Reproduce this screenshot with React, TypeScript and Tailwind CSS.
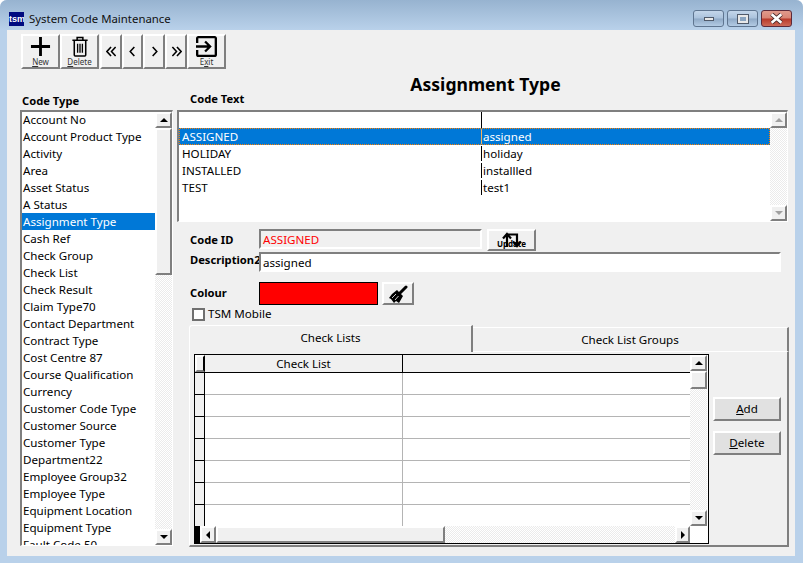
import type { ReactNode } from "react";

const codeTypes = [
  "Account No", "Account Product Type", "Activity", "Area", "Asset Status", "A Status",
  "Assignment Type", "Cash Ref", "Check Group", "Check List", "Check Result", "Claim Type70",
  "Contact Department", "Contract Type", "Cost Centre 87", "Course Qualification", "Currency",
  "Customer Code Type", "Customer Source", "Customer Type", "Department22", "Employee Group32",
  "Employee Type", "Equipment Location", "Equipment Type", "Fault Code 50",
];

const codeRows = [
  ["ASSIGNED", "assigned"],
  ["HOLIDAY", "holiday"],
  ["INSTALLED", "installled"],
  ["TEST", "test1"],
];

const raised = "border-2 border-t-white border-l-white border-r-[#7f7f7f] border-b-[#7f7f7f] bg-[#f0f0f0]";
const sunken = "border-2 border-t-[#7f7f7f] border-l-[#7f7f7f] border-r-white border-b-white";
const track = "bg-[repeating-conic-gradient(#ffffff_0_25%,#ebebeb_0_50%)] bg-[length:2px_2px]";

type Dir = "up" | "down" | "left" | "right";

const Arrow = ({ dir, color = "#000" }: { dir: Dir; color?: string }) => {
  const pts = {
    up: "0,4 8,4 4,0",
    down: "0,0 8,0 4,4",
    left: "4,0 4,8 0,4",
    right: "0,0 0,8 4,4",
  }[dir];
  const vertical = dir === "up" || dir === "down";
  return (
    <svg width={vertical ? 8 : 4} height={vertical ? 4 : 8} viewBox={vertical ? "0 0 8 4" : "0 0 4 8"}>
      <polygon points={pts} fill={color} />
    </svg>
  );
};

const VScroll = ({ disabled, thumb }: { disabled?: boolean; thumb?: string }) => {
  const color = disabled ? "#a0a0a0" : "#000";
  return (
    <div className={"flex flex-col w-[17px] h-full shrink-0 " + track}>
      <div className={"h-[16px] shrink-0 flex items-center justify-center " + raised}>
        <Arrow dir="up" color={color} />
      </div>
      {thumb && <div className={"shrink-0 " + thumb + " " + raised} />}
      <div className="flex-1" />
      <div className={"h-[16px] shrink-0 flex items-center justify-center " + raised}>
        <Arrow dir="down" color={color} />
      </div>
    </div>
  );
};

const ToolButton = ({ children, label, width = "w-[39px]" }: { children: ReactNode; label?: ReactNode; width?: string }) => (
  <div className={"h-[35px] flex flex-col items-center shrink-0 " + width + (label ? " " : " justify-center ") + raised}>
    {children}
    {label && <span className="text-[8px] leading-[9px] text-[#333]">{label}</span>}
  </div>
);

const Chevrons = ({ d }: { d: string }) => (
  <svg width="11" height="11" viewBox="0 0 12 12" fill="none" stroke="#000" strokeWidth="1.7">
    <path d={d} />
  </svg>
);

const CaptionButton = ({ children, close }: { children: ReactNode; close?: boolean }) => (
  <div
    className={
      "w-[31px] h-[17px] rounded-[3px] border flex items-center justify-center " +
      (close
        ? "border-[#5c2a3a] bg-[linear-gradient(#e09a8c_0%,#d98474_48%,#b8392a_52%,#cc6a58_100%)]"
        : "border-[#5f7590] bg-[linear-gradient(#c4d6ea_0%,#aac2dc_48%,#8fa9c6_52%,#b3cbe4_100%)]")
    }
  >
    {children}
  </div>
);

const GridRow = () => (
  <div className="h-[22px] flex shrink-0">
    <div className="w-[10px] bg-[#f0f0f0] border-r border-b border-black shrink-0" />
    <div className="w-[198px] bg-white border-r border-b border-[#b4b4b4] shrink-0" />
    <div className="flex-1 bg-white border-b border-[#b4b4b4]" />
  </div>
);

export default function App() {
  return (
    <div className="w-[803px] h-[563px] bg-white overflow-hidden text-[11.6px] leading-[14px] text-black font-['Noto_Sans','Open_Sans',sans-serif]">
      <div className="w-full h-full rounded-t-[7px] flex flex-col bg-[#b9d1ea] overflow-hidden">
        {/* Title bar */}
        <div className="h-[30px] shrink-0 flex items-center pl-[9px] pr-[11px] pt-[7px] bg-[linear-gradient(#97b3d0,#b9d1ea)]">
          <div className="w-[15px] h-[14px] bg-[#000a80] text-white text-[9px] leading-[14px] font-bold text-center overflow-hidden font-['Liberation_Sans',sans-serif]">
            tsm
          </div>
          <span className="ml-[5px] text-[11.4px] text-[#111]">System Code Maintenance</span>
          <div className="ml-auto flex gap-[3px]">
            <CaptionButton>
              <div className="w-[10px] h-[4px] bg-[#e8e8e8] border border-[#505a6a]" />
            </CaptionButton>
            <CaptionButton>
              <div className="w-[10px] h-[8px] border-2 border-[#e8e8e8] outline outline-[#505a6a] bg-[#8aa4c0]" />
            </CaptionButton>
            <CaptionButton close>
              <svg width="13" height="11" viewBox="0 0 12 10">
                <path d="M1.5 1 L10.5 9 M10.5 1 L1.5 9" stroke="#4a2a2a" strokeWidth="4" />
                <path d="M1.5 1 L10.5 9 M10.5 1 L1.5 9" stroke="#fff" strokeWidth="2.4" />
              </svg>
            </CaptionButton>
          </div>
        </div>

        {/* Client area */}
        <div className="ml-[7px] w-[788px] h-[526px] shrink-0 bg-[#f0f0f0]">
          {/* Toolbar */}
          <div className="h-[39px] pt-[4px] pl-[14px] flex items-start">
            <ToolButton label={<><u>N</u>ew</>}>
              <svg width="21" height="21" viewBox="0 0 22 22" className="-ml-[1px]">
                <path d="M11 1 V21 M1 11 H21" stroke="#000" strokeWidth="3" />
              </svg>
            </ToolButton>
            <ToolButton label={<><u>D</u>elete</>}>
              <svg width="18" height="21" viewBox="0 0 18 22" fill="none" stroke="#000" strokeWidth="1.6">
                <path d="M1 4.5 H17 M6 4.5 V1.5 H12 V4.5 M3 4.5 V20 Q3 21 4 21 H14 Q15 21 15 20 V4.5" />
                <path d="M6.5 8 V17.5 M9 8 V17.5 M11.5 8 V17.5" strokeWidth="1.4" />
              </svg>
            </ToolButton>
            <div className="w-[1px]" />
            <ToolButton width="w-[22px]">
              <Chevrons d="M5.5 1 L1 6 L5.5 11 M10.5 1 L6 6 L10.5 11" />
            </ToolButton>
            <ToolButton width="w-[21px]">
              <Chevrons d="M8 1 L3.5 6 L8 11" />
            </ToolButton>
            <ToolButton width="w-[22px]">
              <Chevrons d="M4 1 L8.5 6 L4 11" />
            </ToolButton>
            <ToolButton width="w-[22px]">
              <Chevrons d="M1.5 1 L6 6 L1.5 11 M6.5 1 L11 6 L6.5 11" />
            </ToolButton>
            <ToolButton label={<>E<u>x</u>it</>}>
              <svg viewBox="3 3 18 18" className="w-[21px] h-[21px]">
                <path d="M10.09 15.59L11.5 17l5-5-5-5-1.41 1.41L12.67 11H3v2h9.67l-2.58 2.59zM19 3H5c-1.11 0-2 .9-2 2v4h2V5h14v14H5v-4H3v4c0 1.1.89 2 2 2h14c1.1 0 2-.9 2-2V5c0-1.1-.9-2-2-2z" fill="#000" />
              </svg>
            </ToolButton>
          </div>

          <div className="flex">
            {/* Code type list */}
            <div className="ml-[13px] w-[153px] shrink-0">
              <div className="mt-[25px] h-[16px] pl-[2px] text-[11.2px] font-bold">Code Type</div>
              <div className={"h-[436px] flex bg-white border-r-[1px] border-b-[1px] " + sunken}>
                <div className="w-[133px] overflow-hidden">
                  <div className="-mt-[1px]">
                    {codeTypes.map((t) => (
                      <div
                        key={t}
                        className={
                          "h-[17px] leading-[17px] pl-[1px] whitespace-nowrap " +
                          (t === "Assignment Type" ? "bg-[#0078d7] text-white" : "")
                        }
                      >
                        {t}
                      </div>
                    ))}
                  </div>
                </div>
                <VScroll thumb="h-[147px]" />
              </div>
            </div>

            {/* Right side */}
            <div className="ml-[4px] w-[612px] shrink-0">
              <div className="mt-[5px] h-[20px] pl-[5px] text-center text-[17.6px] leading-[20px] font-bold">Assignment Type</div>
              <div className="-mt-[2px] mb-[2px] h-[16px] pl-[13px] text-[11.2px] font-bold">Code Text</div>

              <div className={"h-[112px] w-[611px] flex bg-white border-r-[1px] border-b-[1px] " + sunken}>
                <div className="w-[591px]">
                  <div className="h-[16px] flex">
                    <div className="w-[302px]" />
                    <div className="flex-1 border-l border-black" />
                  </div>
                  {codeRows.map(([a, b], i) => (
                    <div
                      key={a}
                      className={
                        "h-[17px] p-[1px] leading-[15px] " +
                        (i === 0 ? "text-white bg-[repeating-conic-gradient(#ff8000_0_25%,#0078d7_0_50%)] bg-[length:2px_2px]" : "")
                      }
                    >
                      <div className={"h-full flex " + (i === 0 ? "bg-[#0078d7]" : "")}>
                        <div className="w-[301px] pl-[2px]">{a}</div>
                        <div className={"flex-1 pl-[1px] border-l " + (i === 0 ? "border-[#f5b060]" : "border-black")}>{b}</div>
                      </div>
                    </div>
                  ))}
                </div>
                <VScroll disabled />
              </div>

              {/* Code ID / description */}
              <div className="mt-[7px] h-[23px] flex items-start">
                <div className="w-[82px] pl-[13px] pt-[4px] text-[11.2px] font-bold">Code ID</div>
                <div className={"w-[223px] h-[20px] leading-[18px] pl-[2px] text-[#f00] " + sunken}>ASSIGNED</div>
                <div className={"ml-[5px] w-[49px] h-[22px] flex flex-col items-center relative " + raised}>
                  <svg width="22" height="16" viewBox="0 0 22 16" fill="none" stroke="#000" strokeWidth="2.2" className="mt-[1px]">
                    <path d="M6 15 V3 M2 6.5 L6 2 L10 6.5" />
                    <path d="M7 2.5 H16 V13 M12 9.5 L16 14 L20 9.5" />
                  </svg>
                  <span className="absolute top-[8px] text-[8px] leading-[10px] font-bold">Update</span>
                </div>
              </div>
              <div className="h-[20px] flex">
                <div className="w-[82px] pl-[13px] pt-[1px] text-[11.2px] font-bold whitespace-nowrap">Description2</div>
                <div className={"w-[522px] h-[20px] leading-[18px] pl-[2px] bg-white " + sunken}>assigned</div>
              </div>

              {/* Colour */}
              <div className="mt-[10px] h-[23px] flex">
                <div className="w-[82px] pl-[13px] pt-[4px] text-[11.2px] font-bold">Colour</div>
                <div className="w-[119px] border border-black bg-[#f00]" />
                <div className={"ml-[4px] w-[32px] flex items-center justify-center " + raised}>
                  <svg width="20" height="20" viewBox="0 0 20 20">
                    <path d="M12 9 L18 3" stroke="#000" strokeWidth="3" strokeLinecap="round" />
                    <polygon points="9,6 15,12 11,19 8,17 6,19 3,15 1,14 4,10" fill="#000" />
                    <path d="M8 10 L4 14 M10.5 12 L7 16" stroke="#fff" strokeWidth="0.8" />
                  </svg>
                </div>
              </div>

              <div className="mt-[2px] h-[14px] flex items-center pl-[15px]">
                <div className="w-[13px] h-[13px] bg-white border-2 border-[#707070]" />
                <span className="ml-[3px]">TSM Mobile</span>
              </div>

              {/* Tabs */}
              <div className="mt-[4px] ml-[12px] w-[600px] h-[27px] flex items-end">
                <div className="w-[284px] h-[27px] leading-[24px] text-center bg-[#f0f0f0] border-t border-l border-white border-r-2 border-r-[#7f7f7f] rounded-tl-[3px]">
                  Check Lists
                </div>
                <div className="flex-1 h-[25px] leading-[24px] text-center border-t border-white border-r-2 border-r-[#7f7f7f] border-b">
                  Check List Groups
                </div>
              </div>
              <div className="ml-[12px] w-[600px] h-[195px] pt-[2px] pl-[4px] flex border-l border-l-white border-r-2 border-r-[#7f7f7f] border-b-2 border-b-[#7f7f7f]">
                {/* Grid */}
                <div className="w-[515px] h-[190px] shrink-0 border border-black flex flex-col">
                  <div className="h-[171px] flex shrink-0">
                    <div className="w-[495px] overflow-hidden flex flex-col">
                      <div className="h-[18px] shrink-0 flex border-b border-black">
                        <div className="w-[10px] shrink-0 border-2 border-t-white border-l-white border-b-[#7f7f7f] border-r-black" />
                        <div className="w-[198px] shrink-0 text-center leading-[18px] border-r border-black">Check List</div>
                        <div className="flex-1" />
                      </div>
                      {[0, 1, 2, 3, 4, 5, 6].map((r) => (
                        <GridRow key={r} />
                      ))}
                    </div>
                    <div className="w-[18px] h-full shrink-0 bg-white">
                      <VScroll thumb="h-[18px]" />
                    </div>
                  </div>
                  <div className="h-[17px] flex shrink-0">
                    <div className="w-[5px] bg-black" />
                    <div className={"w-[16px] flex items-center justify-center " + raised}>
                      <Arrow dir="left" />
                    </div>
                    <div className={"w-[229px] " + raised} />
                    <div className={"w-[230px] " + track} />
                    <div className={"w-[15px] flex items-center justify-center " + raised}>
                      <Arrow dir="right" />
                    </div>
                    <div className="flex-1 bg-white" />
                  </div>
                </div>

                {/* Side buttons */}
                <div className="ml-[4px] w-[68px] pt-[43px] flex flex-col gap-[10px]">
                  <div className={"h-[24px] leading-[20px] text-center !bg-[#e1e1e1] " + raised}>
                    <u>A</u>dd
                  </div>
                  <div className={"h-[24px] leading-[20px] text-center !bg-[#e1e1e1] " + raised}>
                    <u>D</u>elete
                  </div>
                </div>
              </div>
            </div>
          </div>
        </div>
      </div>
    </div>
  );
}
